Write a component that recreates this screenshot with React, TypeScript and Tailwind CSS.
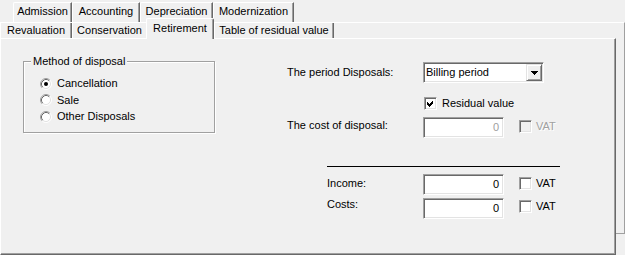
import React from "react"

const sunken =
  "border border-t-[#a0a0a0] border-l-[#a0a0a0] border-b-white border-r-white shadow-[inset_1px_1px_0_#696969,inset_-1px_-1px_0_#e3e3e3]"

const raised =
  "border border-t-[#e3e3e3] border-l-[#e3e3e3] border-b-[#696969] border-r-[#696969] shadow-[inset_1px_1px_0_#fff,inset_-1px_-1px_0_#a0a0a0]"

const tabBase =
  "flex justify-center bg-[#f0f0f0] border-l border-l-white leading-[13px] whitespace-nowrap"

const tabRight = "border-r border-r-[#696969] shadow-[inset_-1px_0_0_#a0a0a0]"

const disabledText = "text-[#a0a0a0] [text-shadow:1px_1px_0_#fff]"

function CheckBox({ checked, disabled }: { checked?: boolean; disabled?: boolean }) {
  return (
    <span
      className={`relative block w-[13px] h-[13px] shrink-0 ${sunken} ${
        disabled ? "bg-[#f0f0f0]" : "bg-white"
      }`}
    >
      {checked && (
        <svg
          className="absolute left-[1px] top-[1px]"
          width="9"
          height="9"
          viewBox="0 0 9 9"
          shapeRendering="crispEdges"
        >
          <polygon points="1,3 3,5 7,1 7,4 3,8 1,6" fill="#000" />
        </svg>
      )}
    </span>
  )
}

function Radio({ checked }: { checked?: boolean }) {
  return (
    <svg width="12" height="12" viewBox="0 0 12 12" className="shrink-0">
      <circle cx="6" cy="6" r="5" fill="#fff" />
      <path d="M2.11 9.89 A5.5 5.5 0 0 1 9.89 2.11" stroke="#a0a0a0" fill="none" />
      <path d="M9.89 2.11 A5.5 5.5 0 0 1 2.11 9.89" stroke="#fff" fill="none" />
      <path d="M2.82 9.18 A4.5 4.5 0 0 1 9.18 2.82" stroke="#696969" fill="none" />
      <path d="M9.18 2.82 A4.5 4.5 0 0 1 2.82 9.18" stroke="#e3e3e3" fill="none" />
      {checked && <circle cx="6" cy="6" r="2" fill="#000" />}
    </svg>
  )
}

function Edit({ value, disabled }: { value: string; disabled?: boolean }) {
  return (
    <div
      className={`w-[81px] h-[21px] shrink-0 bg-white ${sunken} flex items-center justify-end pr-[4px] leading-[13px] ${
        disabled ? disabledText : ""
      }`}
    >
      {value}
    </div>
  )
}

function App() {
  return (
    <div className="w-[625px] h-[255px] overflow-hidden bg-[#f0f0f0] text-[11px] text-black font-['Liberation_Sans',Arial,sans-serif] flex flex-col">

      {/* back row of tabs */}
      <div className="flex h-[22px] pl-[13px] pt-[2px]">
        <div className={`${tabBase} ${tabRight} w-[59px] h-[20px] pt-[2px] border-t border-t-white rounded-tl-[2px]`}>
          Admission
        </div>
        <div className={`${tabBase} ${tabRight} w-[68px] h-[20px] pt-[2px] border-t border-t-white rounded-tl-[2px]`}>
          Accounting
        </div>
        <div className={`${tabBase} ${tabRight} w-[73px] h-[20px] pt-[2px] border-t border-t-white rounded-tl-[2px]`}>
          Depreciation
        </div>
        <div className={`${tabBase} ${tabRight} w-[81px] h-[20px] pt-[2px] border-t border-t-white rounded-tl-[2px]`}>
          Modernization
        </div>
      </div>

      {/* outer frame */}
      <div className="h-[212px] border-t border-t-white border-r border-r-[#a0a0a0] border-b border-b-[#a0a0a0]">

        {/* front row of tabs */}
        <div className="flex h-[15px]">
          <div className={`${tabBase} ${tabRight} w-[72px] h-[15px] pt-[1px]`}>
            Revaluation
          </div>
          <div className={`${tabBase} w-[74px] h-[15px] pt-[1px]`}>
            Conservation
          </div>
          <div className={`${tabBase} ${tabRight} relative z-10 w-[68px] h-[21px] -mt-[5px] pt-[3px] border-t border-t-white rounded-t-[2px]`}>
            Retirement
          </div>
          <div className={`${tabBase} ${tabRight} w-[120px] h-[15px] pt-[1px]`}>
            Table of residual value
          </div>
        </div>

        {/* page */}
        <div className="w-[616px] h-[217px] bg-[#f0f0f0] border-t border-t-white border-l border-l-white border-r border-r-[#696969] border-b border-b-[#696969] shadow-[inset_-1px_-1px_0_#a0a0a0] flex items-start leading-[13px]">

          {/* method of disposal */}
          <div className="relative ml-[22px] mt-[22px] w-[192px] h-[72px] border border-[#a0a0a0] shadow-[inset_1px_1px_0_#fff,1px_1px_0_#fff] pl-[16px] pt-[15px] flex flex-col gap-[3.5px]">
            <span className="absolute -top-[7px] left-[7px] px-[2px] bg-[#f0f0f0]">
              Method of disposal
            </span>
            <div className="flex items-center gap-[5px] h-[13px]">
              <Radio checked />
              <span>Cancellation</span>
            </div>
            <div className="flex items-center gap-[5px] h-[13px]">
              <Radio />
              <span>Sale</span>
            </div>
            <div className="flex items-center gap-[5px] h-[13px]">
              <Radio />
              <span>Other Disposals</span>
            </div>
          </div>

          {/* right side */}
          <div className="ml-[72px] mt-[23px] flex flex-col">

            <div className="flex items-center h-[21px]">
              <span className="w-[136px]">The period Disposals:</span>
              <div className={`w-[121px] h-[21px] bg-white ${sunken} flex items-center justify-between pl-[2px] pr-[1px]`}>
                <span>Billing period</span>
                <div className={`w-[16px] h-[17px] bg-[#f0f0f0] ${raised} flex items-center justify-center`}>
                  <svg width="7" height="4" viewBox="0 0 7 4" shapeRendering="crispEdges">
                    <polygon points="0,0 7,0 3.5,4" fill="#000" />
                  </svg>
                </div>
              </div>
            </div>

            <div className="flex items-center h-[13px] mt-[14px] pl-[137px] gap-[5px]">
              <CheckBox checked />
              <span>Residual value</span>
            </div>

            <div className="flex items-start h-[21px] mt-[7px]">
              <span className="w-[136px] pt-[2px]">The cost of disposal:</span>
              <Edit value="0" disabled />
              <div className="flex items-center gap-[4px] ml-[15px] mt-[3px]">
                <CheckBox disabled />
                <span className={disabledText}>VAT</span>
              </div>
            </div>

            <div className="ml-[40px] w-[233px] h-[1px] bg-black mt-[28px]" />

            <div className="flex items-start h-[20px] mt-[7px] ml-[40px]">
              <span className="w-[96px] pt-[3px]">Income:</span>
              <Edit value="0" />
              <div className="flex items-center gap-[4px] ml-[15px] mt-[3px]">
                <CheckBox />
                <span>VAT</span>
              </div>
            </div>

            <div className="flex items-start h-[20px] mt-[4px] ml-[40px]">
              <span className="w-[96px] pt-[0px]">Costs:</span>
              <Edit value="0" />
              <div className="flex items-center gap-[4px] ml-[15px] mt-[2px]">
                <CheckBox />
                <span>VAT</span>
              </div>
            </div>

          </div>
        </div>
      </div>
    </div>
  )
}

export default App
